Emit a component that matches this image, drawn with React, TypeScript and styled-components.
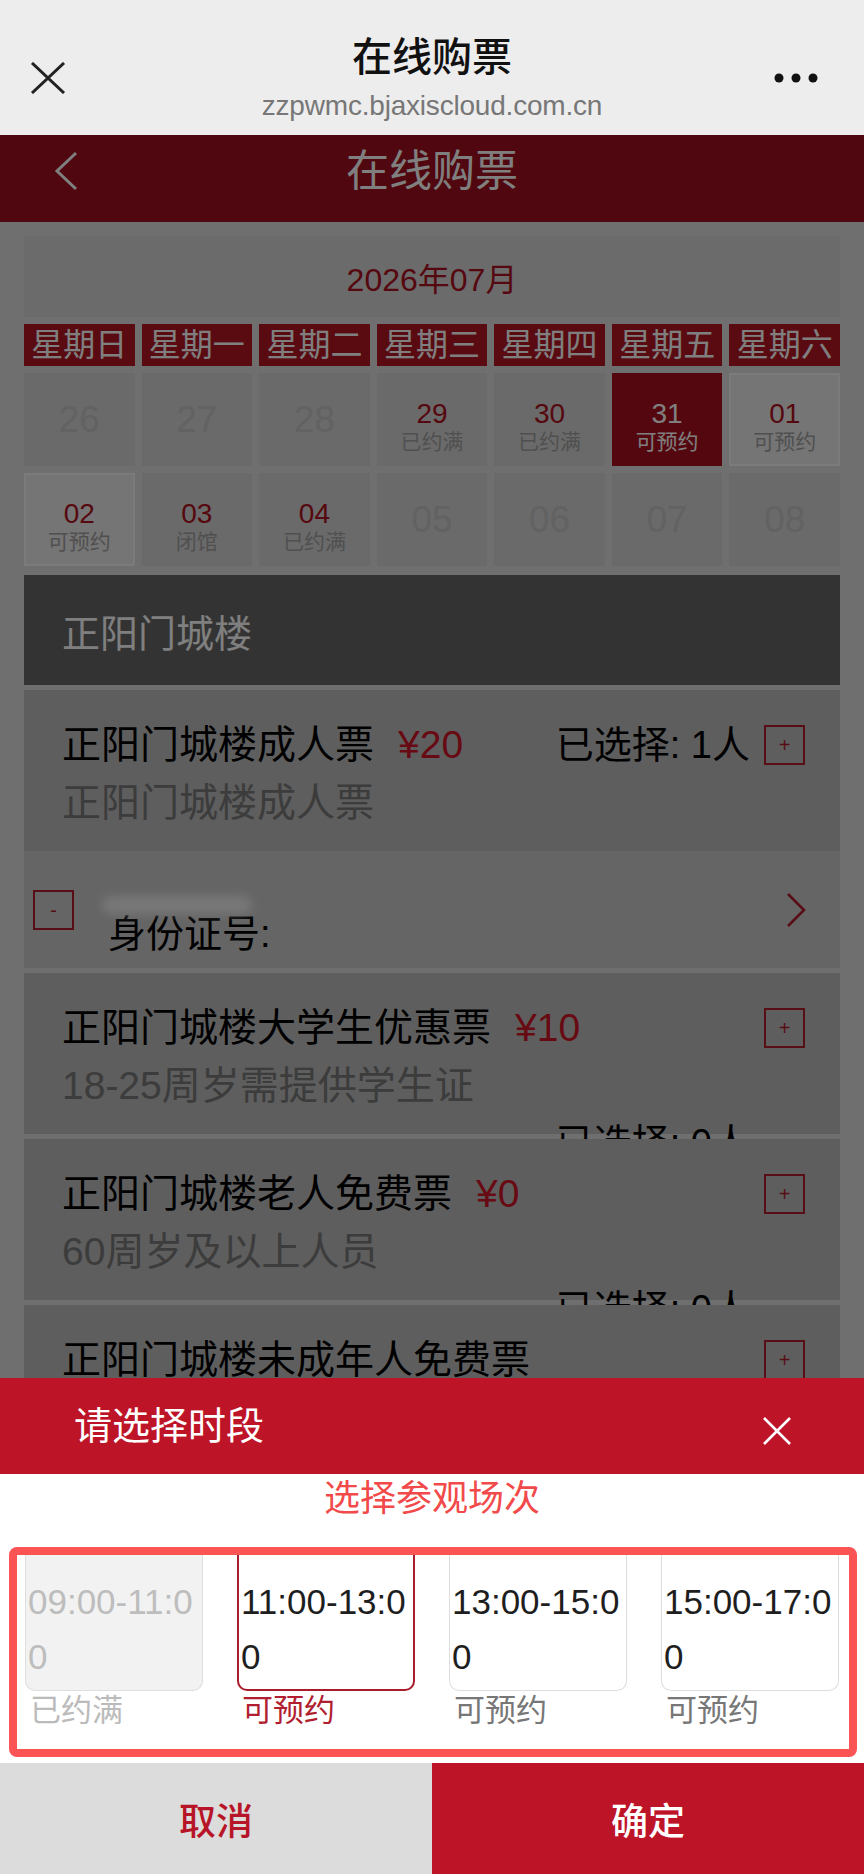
import React from "react";
import styled, { createGlobalStyle, css } from "styled-components";

const GlobalStyle = createGlobalStyle`
  html, body { margin: 0; padding: 0; background: #ffffff; }
  body { font-family: "Liberation Sans", "Noto Sans CJK SC", sans-serif; }
  * { box-sizing: border-box; }
`;

const FONT = `"Liberation Sans", "Noto Sans CJK SC", sans-serif`;

const Screen = styled.div`
  position: relative;
  width: 864px;
  height: 1874px;
  overflow: hidden;
  display: flex;
  flex-direction: column;
  font-family: ${FONT};
`;

/* ---------- browser chrome ---------- */
const BrowserBar = styled.header`
  flex: none;
  height: 135px;
  background: #ededed;
  display: grid;
  grid-template-columns: 100px 1fr 100px;
  align-items: center;
  padding-top: 20px;
`;

const BarIconLeft = styled.div`
  justify-self: start;
  margin-left: 30px;
  display: flex;
`;

const BarIconRight = styled.div`
  justify-self: end;
  margin-right: 46px;
  display: flex;
`;

const BarTexts = styled.div`
  align-self: start;
  margin-top: 10px;
  display: flex;
  flex-direction: column;
  align-items: center;
`;

const BarTitle = styled.div`
  font-size: 40px;
  line-height: 54px;
  font-weight: 500;
  color: #111111;
`;

const BarUrl = styled.div`
  margin-top: 4px;
  font-size: 28px;
  line-height: 36px;
  color: #777777;
  letter-spacing: -0.2px;
`;

/* ---------- dimmed page ---------- */
const PageArea = styled.div`
  position: relative;
  flex: 1;
  overflow: hidden;
  background: #dedede;
`;

const Mask = styled.div`
  position: absolute;
  inset: 0;
  z-index: 1;
  background: rgba(0, 0, 0, 0.5);
`;

const AppHeader = styled.div`
  height: 87px;
  background: #a00f1e;
  display: grid;
  grid-template-columns: 100px 1fr 100px;
  align-items: center;
  padding-bottom: 15px;
`;

const BackIcon = styled.div`
  justify-self: start;
  margin-left: 54px;
  display: flex;
`;

const AppTitle = styled.div`
  text-align: center;
  font-size: 43px;
  line-height: 50px;
  color: #ffffff;
`;

const Content = styled.div`
  padding: 14px 24px 0;
`;

const MonthBox = styled.div`
  height: 81px;
  background: #d6d6d6;
  display: flex;
  align-items: center;
  justify-content: center;
  font-size: 32px;
  color: #ad1020;
`;

const WeekRow = styled.div`
  margin-top: 7px;
  display: grid;
  grid-template-columns: repeat(7, 1fr);
  gap: 7px;
`;

const WeekCell = styled.div`
  height: 42px;
  background: #b41422;
  color: #ffffff;
  font-size: 32px;
  line-height: 42px;
  text-align: center;
  white-space: nowrap;
  overflow: hidden;
`;

const DateGrid = styled.div`
  margin-top: 7px;
  display: grid;
  grid-template-columns: repeat(7, 1fr);
  grid-auto-rows: 93px;
  gap: 7px;
`;

type DayState = "off" | "full" | "closed" | "open" | "selected";

const DateCell = styled.div<{ $state: DayState }>`
  display: flex;
  flex-direction: column;
  align-items: center;
  justify-content: center;
  padding-top: ${(p) => (p.$state === "off" ? 0 : 11)}px;
  background: #d4d4d4;
  border: 2px solid transparent;
  ${(p) =>
    p.$state === "open" &&
    css`
      background: #ebebeb;
      border-color: #f6f6f6;
    `}
  ${(p) =>
    p.$state === "selected" &&
    css`
      background: #aa0f1e;
    `}
`;

const DayNum = styled.div<{ $state: DayState }>`
  font-size: ${(p) => (p.$state === "off" ? 37 : 28)}px;
  line-height: ${(p) => (p.$state === "off" ? 44 : 34)}px;
  color: ${(p) =>
    p.$state === "off" ? "#c4c4c4" : p.$state === "selected" ? "#ffffff" : "#ad1020"};
`;

const DayStatus = styled.div<{ $state: DayState }>`
  font-size: 21px;
  line-height: 22px;
  color: ${(p) => (p.$state === "selected" ? "#ffffff" : "#a0a0a0")};
`;

const VenueHeader = styled.div`
  margin-top: 9px;
  height: 110px;
  background: #666666;
  display: flex;
  align-items: center;
  padding-left: 38px;
  font-size: 38px;
  color: #ffffff;
`;

const TicketCard = styled.div`
  position: relative;
  margin-top: 5px;
  height: 161px;
  background: #bcbcbc;
  padding: 26px 35px 0 38px;
  display: grid;
  grid-template-columns: 1fr auto;
  column-gap: 14px;
  align-content: start;
`;

const TicketName = styled.div`
  font-size: 39px;
  line-height: 58px;
  color: #000000;
  white-space: nowrap;
`;

const Price = styled.span`
  margin-left: 24px;
  color: #d01428;
`;

const Controls = styled.div`
  display: flex;
  align-items: center;
  gap: 14px;
`;

const CountText = styled.div<{ $wrapped?: boolean }>`
  font-size: 38px;
  line-height: ${(p) => (p.$wrapped ? 56 : 58)}px;
  color: #000000;
  white-space: nowrap;
  ${(p) =>
    p.$wrapped &&
    css`
      grid-column: 1 / -1;
      justify-self: end;
      margin-right: 55px;
    `}
`;

const SquareButton = styled.div`
  width: 41px;
  height: 40px;
  border: 2px solid #b01c2c;
  display: flex;
  align-items: center;
  justify-content: center;
  font-size: 20px;
  line-height: 1;
  color: #b01c2c;
  flex: none;
`;

const TicketDesc = styled.div`
  grid-column: 1 / -1;
  font-size: 39px;
  line-height: 58px;
  color: #787878;
  white-space: nowrap;
`;

const VisitorRow = styled.div`
  position: relative;
  height: 117px;
  background: #cacaca;
  display: flex;
  align-items: center;
  padding: 0 34px 0 9px;
`;

const VisitorInfo = styled.div`
  align-self: stretch;
  margin-left: 34px;
  padding-top: 45px;
  display: flex;
  flex-direction: column;
`;

const NameBlur = styled.div`
  width: 150px;
  height: 18px;
  margin-left: -6px;
  margin-bottom: -2px;
  background: #f4f4f4;
  border-radius: 9px;
  filter: blur(5px);
  opacity: 0.9;
`;

const IdLabel = styled.div`
  font-size: 38px;
  line-height: 44px;
  color: #000000;
`;

const RowArrow = styled.div`
  margin-left: auto;
  display: flex;
`;

/* ---------- bottom sheet ---------- */
const Sheet = styled.section`
  position: absolute;
  left: 0;
  right: 0;
  bottom: 0;
  z-index: 2;
  background: #ffffff;
  display: flex;
  flex-direction: column;
`;

const SheetHeader = styled.div`
  height: 96px;
  background: #be1428;
  display: flex;
  align-items: center;
  justify-content: space-between;
  padding: 0 72px 0 74px;
`;

const SheetTitle = styled.div`
  font-size: 38px;
  line-height: 50px;
  color: #ffffff;
`;

const SheetClose = styled.div`
  display: flex;
  margin-top: 10px;
`;

const SessionTitle = styled.div`
  font-size: 36px;
  line-height: 50px;
  text-align: center;
  color: #f24a4a;
`;

const SlotFrame = styled.div`
  margin: 23px 7px 6px 9px;
  border: 8px solid #fa5454;
  border-radius: 8px;
  padding: 0 0 18px 8px;
  display: flex;
  gap: 34px;
  overflow: hidden;
`;

type SlotState = "full" | "selected" | "open";

const SlotColumn = styled.div`
  width: 178px;
  flex: none;
  display: flex;
  flex-direction: column;
`;

const SlotBox = styled.div<{ $state: SlotState }>`
  height: 136px;
  padding: 19px 0 0 2px;
  border: 1px solid #dedede;
  border-top: 0;
  border-radius: 0 0 10px 10px;
  background: ${(p) => (p.$state === "full" ? "#f2f2f2" : "#ffffff")};
  font-size: 35px;
  line-height: 55px;
  color: ${(p) => (p.$state === "full" ? "#bdbdbd" : "#1e1e1e")};
  word-break: break-all;
  overflow-wrap: anywhere;
  ${(p) =>
    p.$state === "selected" &&
    css`
      border: 2px solid #a81c2c;
      border-top: 0;
    `}
`;

const SlotStatus = styled.div<{ $state: SlotState }>`
  padding-left: 5px;
  font-size: 31px;
  line-height: 40px;
  color: ${(p) =>
    p.$state === "full" ? "#bbbbbb" : p.$state === "selected" ? "#b01e30" : "#777777"};
`;

const ButtonBar = styled.div`
  height: 111px;
  display: grid;
  grid-template-columns: 1fr 1fr;
`;

const ActionButton = styled.div<{ $primary?: boolean }>`
  display: flex;
  align-items: center;
  justify-content: center;
  font-size: 37px;
  font-weight: 500;
  background: ${(p) => (p.$primary ? "#be1428" : "#dcdcdc")};
  color: ${(p) => (p.$primary ? "#ffffff" : "#b81428")};
`;

/* ---------- data ---------- */
const weekdays = ["星期日", "星期一", "星期二", "星期三", "星期四", "星期五", "星期六"];

const days: { n: string; state: DayState; label?: string }[] = [
  { n: "26", state: "off" },
  { n: "27", state: "off" },
  { n: "28", state: "off" },
  { n: "29", state: "full", label: "已约满" },
  { n: "30", state: "full", label: "已约满" },
  { n: "31", state: "selected", label: "可预约" },
  { n: "01", state: "open", label: "可预约" },
  { n: "02", state: "open", label: "可预约" },
  { n: "03", state: "closed", label: "闭馆" },
  { n: "04", state: "full", label: "已约满" },
  { n: "05", state: "off" },
  { n: "06", state: "off" },
  { n: "07", state: "off" },
  { n: "08", state: "off" },
];

const tickets: { name: string; price?: string; desc?: string; count?: boolean }[] = [
  { name: "正阳门城楼大学生优惠票", price: "¥10", desc: "18-25周岁需提供学生证", count: true },
  { name: "正阳门城楼老人免费票", price: "¥0", desc: "60周岁及以上人员", count: true },
  { name: "正阳门城楼未成年人免费票" },
];

const slots: { time: string; status: string; state: SlotState }[] = [
  { time: "09:00-11:00", status: "已约满", state: "full" },
  { time: "11:00-13:00", status: "可预约", state: "selected" },
  { time: "13:00-15:00", status: "可预约", state: "open" },
  { time: "15:00-17:00", status: "可预约", state: "open" },
];

/* ---------- icons ---------- */
const CloseGlyph = () => (
  <svg width="36" height="32" viewBox="0 0 36 32">
    <path d="M2 1 L34 31 M34 1 L2 31" stroke="#222" strokeWidth="3" fill="none" />
  </svg>
);

const DotsGlyph = () => (
  <svg width="44" height="10" viewBox="0 0 44 10">
    <circle cx="5" cy="5" r="4.5" fill="#111" />
    <circle cx="22" cy="5" r="4.5" fill="#111" />
    <circle cx="39" cy="5" r="4.5" fill="#111" />
  </svg>
);

const BackGlyph = () => (
  <svg width="24" height="40" viewBox="0 0 24 40">
    <path d="M22 2 L3 20 L22 38" stroke="#fff" strokeWidth="3" fill="none" />
  </svg>
);

const ArrowGlyph = () => (
  <svg width="20" height="36" viewBox="0 0 20 36">
    <path d="M2 2 L18 18 L2 34" stroke="#b01c2c" strokeWidth="2.6" fill="none" />
  </svg>
);

const SheetCloseGlyph = () => (
  <svg width="30" height="30" viewBox="0 0 30 30">
    <path d="M2 2 L28 28 M28 2 L2 28" stroke="#fff" strokeWidth="2.6" fill="none" />
  </svg>
);

export default function App() {
  return (
    <>
      <GlobalStyle />
      <Screen>
        <BrowserBar>
          <BarIconLeft>
            <CloseGlyph />
          </BarIconLeft>
          <BarTexts>
            <BarTitle>在线购票</BarTitle>
            <BarUrl>zzpwmc.bjaxiscloud.com.cn</BarUrl>
          </BarTexts>
          <BarIconRight>
            <DotsGlyph />
          </BarIconRight>
        </BrowserBar>

        <PageArea>
          <AppHeader>
            <BackIcon>
              <BackGlyph />
            </BackIcon>
            <AppTitle>在线购票</AppTitle>
            <div />
          </AppHeader>

          <Content>
            <MonthBox>2026年07月</MonthBox>
            <WeekRow>
              {weekdays.map((w) => (
                <WeekCell key={w}>{w}</WeekCell>
              ))}
            </WeekRow>
            <DateGrid>
              {days.map((d) => (
                <DateCell key={d.n} $state={d.state}>
                  <DayNum $state={d.state}>{d.n}</DayNum>
                  {d.label && <DayStatus $state={d.state}>{d.label}</DayStatus>}
                </DateCell>
              ))}
            </DateGrid>

            <VenueHeader>正阳门城楼</VenueHeader>

            <TicketCard>
              <TicketName>
                正阳门城楼成人票<Price>¥20</Price>
              </TicketName>
              <Controls>
                <CountText>已选择: 1人</CountText>
                <SquareButton>+</SquareButton>
              </Controls>
              <TicketDesc>正阳门城楼成人票</TicketDesc>
            </TicketCard>

            <VisitorRow>
              <SquareButton>-</SquareButton>
              <VisitorInfo>
                <NameBlur />
                <IdLabel>身份证号:</IdLabel>
              </VisitorInfo>
              <RowArrow>
                <ArrowGlyph />
              </RowArrow>
            </VisitorRow>

            {tickets.map((t) => (
              <TicketCard key={t.name}>
                <TicketName>
                  {t.name}
                  {t.price && <Price>{t.price}</Price>}
                </TicketName>
                <Controls>
                  <SquareButton>+</SquareButton>
                </Controls>
                {t.desc && <TicketDesc>{t.desc}</TicketDesc>}
                {t.count && <CountText $wrapped>已选择: 0人</CountText>}
              </TicketCard>
            ))}
          </Content>
          <Mask />
        </PageArea>

        <Sheet>
          <SheetHeader>
            <SheetTitle>请选择时段</SheetTitle>
            <SheetClose>
              <SheetCloseGlyph />
            </SheetClose>
          </SheetHeader>
          <SessionTitle>选择参观场次</SessionTitle>
          <SlotFrame>
            {slots.map((s) => (
              <SlotColumn key={s.time}>
                <SlotBox $state={s.state}>{s.time}</SlotBox>
                <SlotStatus $state={s.state}>{s.status}</SlotStatus>
              </SlotColumn>
            ))}
          </SlotFrame>
          <ButtonBar>
            <ActionButton>取消</ActionButton>
            <ActionButton $primary>确定</ActionButton>
          </ButtonBar>
        </Sheet>
      </Screen>
    </>
  );
}
